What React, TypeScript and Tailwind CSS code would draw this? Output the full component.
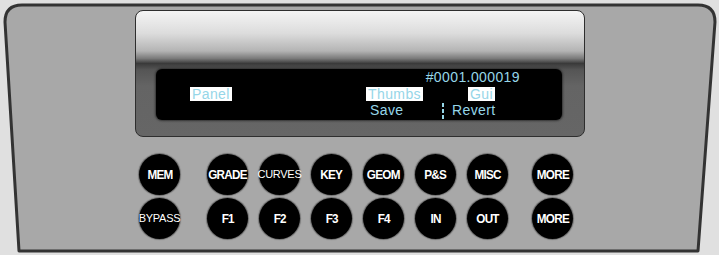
import React from "react";

const topRow = [
  { label: "GRADE", small: false },
  { label: "CURVES", small: true },
  { label: "KEY", small: false },
  { label: "GEOM", small: false },
  { label: "P&S", small: false },
  { label: "MISC", small: false },
];

const bottomRow = [
  { label: "F1", small: false },
  { label: "F2", small: false },
  { label: "F3", small: false },
  { label: "F4", small: false },
  { label: "IN", small: false },
  { label: "OUT", small: false },
];

const RoundKey: React.FC<{ label: string; small?: boolean }> = ({ label, small }) => (
  <div className="w-[41px] h-[41px] rounded-full bg-black flex items-center justify-center shrink-0 shadow-[0_0_1px_1px_rgba(0,0,0,0.35)]">
    <span
      className={
        small
          ? "text-white text-[11px] tracking-[-0.3px] whitespace-nowrap font-['Liberation_Sans',Arial,sans-serif]"
          : "text-white text-[13px] font-bold tracking-[-0.8px] scale-x-90 whitespace-nowrap font-['Liberation_Sans',Arial,sans-serif]"
      }
    >
      {label}
    </span>
  </div>
);

const Tag: React.FC<{ children: React.ReactNode }> = ({ children }) => (
  <span className="bg-white text-[#96d6e8] px-[2px] leading-[14px] h-[14px]">{children}</span>
);

export default function App() {
  return (
    <div className="relative w-[719px] h-[255px] bg-[#e0e0e0] overflow-hidden font-['Liberation_Sans',Arial,sans-serif]">
      <svg className="absolute inset-0" width="719" height="255" viewBox="0 0 719 255">
        <path
          d="M 19 251 L 5 22 Q 5 5 22 5 L 698 5 Q 715 5 715 22 L 698 251 Z"
          fill="#a8a8a8"
          stroke="#333333"
          strokeWidth="3"
          strokeLinejoin="round"
        />
      </svg>

      <div className="relative pt-[10px] pl-[135px]">
        {/* display bezel */}
        <div className="w-[450px] h-[127px] rounded-[8px] border border-[#2e2e2e] bg-[linear-gradient(to_bottom,#f4f4f4_0%,#dcdcdc_18%,#b4b4b4_32%,#7a7a7a_38%,#3a3a3a_42%,#555555_47%,#646464_60%,#666666_100%)] pt-[58px] pl-[20px]">
          <div className="w-[406px] h-[51px] rounded-[6px] bg-black text-[14px] tracking-[0.4px] leading-[15px] text-[#96d6e8] shadow-[0_0_2px_1px_rgba(40,40,40,0.8)]">
            <div className="flex justify-end pr-[42px] pt-[1px] h-[17px]">
              <span>#0001.000019</span>
            </div>
            <div className="flex items-center h-[16px]">
              <div className="w-[210px] pl-[34px] flex">
                <Tag>Panel</Tag>
              </div>
              <div className="w-[102px] flex">
                <Tag>Thumbs</Tag>
              </div>
              <Tag>Gui</Tag>
            </div>
            <div className="flex items-center h-[17px]">
              <div className="w-[214px]" />
              <div className="w-[72px]">Save</div>
              <div className="w-[2px] h-[16px] bg-[linear-gradient(to_bottom,#96d6e8_0_4px,transparent_4px_6px,#96d6e8_6px_10px,transparent_10px_12px,#96d6e8_12px_16px)]" />
              <div className="w-[8px]" />
              <span>Revert</span>
            </div>
          </div>
        </div>
      </div>

      {/* keys */}
      <div className="relative mt-[17px] pl-[139px] flex flex-col gap-[3px]">
        <div className="flex items-center">
          <RoundKey label="MEM" />
          <div className="w-[27px]" />
          <div className="flex gap-[11px]">
            {topRow.map((k) => (
              <RoundKey key={k.label} label={k.label} small={k.small} />
            ))}
          </div>
          <div className="w-[24px]" />
          <RoundKey label="MORE" />
        </div>
        <div className="flex items-center">
          <RoundKey label="BYPASS" small />
          <div className="w-[27px]" />
          <div className="flex gap-[11px]">
            {bottomRow.map((k) => (
              <RoundKey key={k.label} label={k.label} small={k.small} />
            ))}
          </div>
          <div className="w-[24px]" />
          <RoundKey label="MORE" />
        </div>
      </div>
    </div>
  );
}
